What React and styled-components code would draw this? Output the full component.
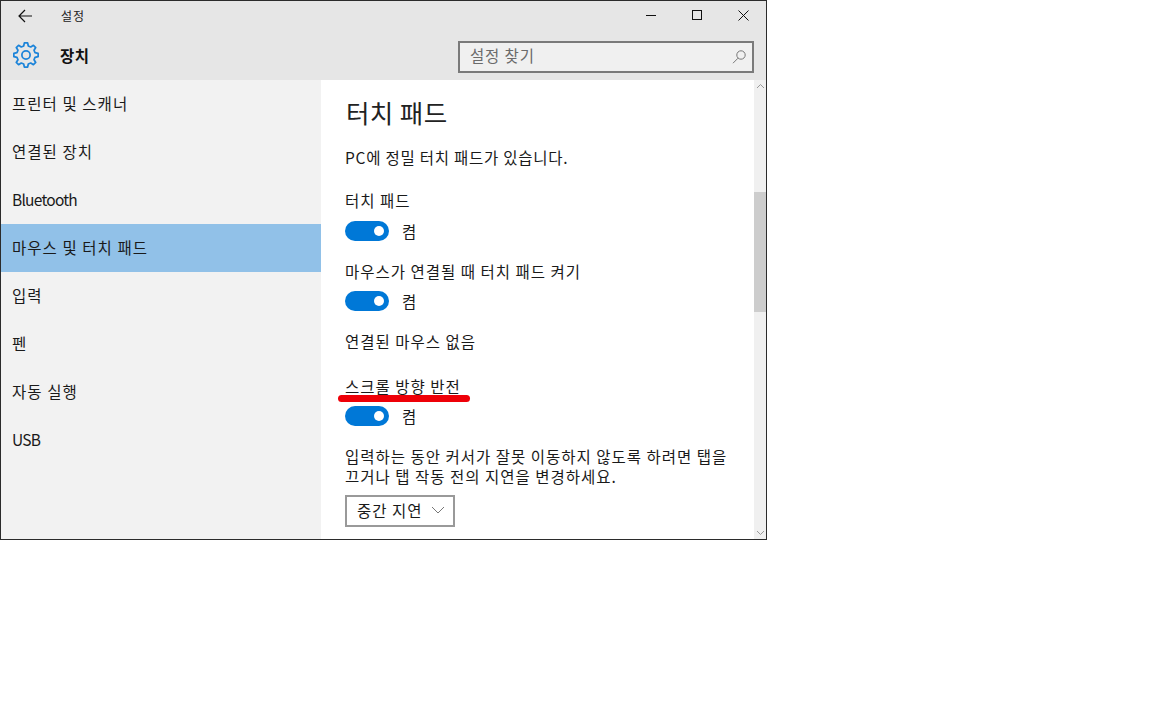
import React from "react";
import styled, { createGlobalStyle } from "styled-components";

const Global = createGlobalStyle`
  html, body { margin: 0; padding: 0; background: #fff; }
  body { font-family: "Noto Sans CJK KR", "Noto Sans", sans-serif; color: #1a1a1a; }
  * { box-sizing: border-box; }
`;
const Win = styled.div`
  width: 767px; height: 540px; border: 1px solid #2b2b2b; display: flex; flex-direction: column; background: #fff; overflow: hidden;
`;
const Header = styled.header`
  height: 79px; background: #e6e6e6; display: flex; flex-direction: column; flex: none;
`;
const TitleBar = styled.div`
  height: 29px; display: flex; align-items: center;
`;
const BackBtn = styled.div`
  width: 48px; height: 29px; display: flex; align-items: center; padding-left: 17px;
`;
const TitleText = styled.div`
  font-size: 12px; letter-spacing: 0.9px; margin-left: 12px; flex: 1; color: #222;
`;
const WinBtn = styled.div`
  width: 46px; height: 29px; display: flex; align-items: center; justify-content: center;
`;
const HeadRow = styled.div`
  flex: 1; display: flex; align-items: center; padding: 0 12px 0 12px;
`;
const PageName = styled.div`
  font-size: 15.5px; font-weight: 700; margin-left: 21px; flex: 1; color: #111; letter-spacing: 0.6px;
`;
const Search = styled.div`
  width: 296px; height: 32px; border: 2px solid #7a7a7a; background: #f0f0f0; display: flex; align-items: center; justify-content: space-between; padding: 0 5px 3px 10px; margin-top: 3px; font-size: 15.5px; letter-spacing: 0.85px; color: #6b6b6b;
`;
const Body = styled.div`
  flex: 1; display: flex; min-height: 0;
`;
const Side = styled.nav`
  width: 320px; background: #f2f2f2; flex: none;
`;
const Item = styled.div`
  height: 48px; display: flex; align-items: center; padding: 0 0 2px 11px; font-size: 15.5px; color: #1a1a1a;
  letter-spacing: ${p => (p.$latin ? "-0.75px" : "1.05px")};
  background: ${p => (p.$active ? "#91c1e8" : "transparent")};
`;
const Main = styled.main`
  flex: 1; padding: 0 24px; background: #fff; position: relative;
`;
const H1 = styled.h1`
  margin: 14px 0 0 1px; font-size: 25.5px; font-weight: 400; line-height: 36px; color: #222; letter-spacing: 0.4px;
`;
const Text = styled.div`
  font-size: 15.5px; line-height: 20px; margin-top: ${p => p.$mt}px; letter-spacing: ${p => p.$ls || 1}px; color: #1a1a1a; position: relative; white-space: nowrap;
`;
const ToggleRow = styled.div`
  display: flex; align-items: center; gap: 13px; height: 20px; margin-top: ${p => p.$mt}px; font-size: 15.5px; color: #1a1a1a;
`;
const Track = styled.div`
  width: 44px; height: 20px; border-radius: 10px; background: #0078d7; display: flex; align-items: center; justify-content: flex-end; padding-right: 5px;
`;
const Knob = styled.div`
  width: 10px; height: 10px; border-radius: 50%; background: #fff;
`;
const RedLine = styled.div`
  position: absolute; left: -7px; top: 19px; width: 132px; height: 7px; border-radius: 4px; background: #ee0008;
`;
const Select = styled.div`
  width: 110px; height: 32px; margin-top: 9px; border: 2px solid #999; display: flex; align-items: center; justify-content: space-between; padding: 0 8px 2px 10px; font-size: 15.5px; letter-spacing: 1px; background: #fff;
`;
const Scroll = styled.div`
  width: 12px; flex: none; background: #f0f0f0; display: flex; flex-direction: column; align-items: center;
`;
const Arrow = styled.div`
  height: 12px; flex: none; display: flex; align-items: center; justify-content: center;
`;
const Thumb = styled.div`
  width: 12px; height: 120px; margin-top: 100px; background: #cdcdcd;
`;
const Spacer = styled.div`flex: 1;`;

const gearPath = (() => {
  const n = 8, R = 11.3, r = 8.6, pts = [];
  for (let i = 0; i < n; i++) {
    const a = (i * 2 * Math.PI) / n - Math.PI / 2;
    const step = (2 * Math.PI) / n;
    const p = (rad, t) => `${(12 + rad * Math.cos(t)).toFixed(2)} ${(12 + rad * Math.sin(t)).toFixed(2)}`;
    pts.push(p(R, a - step * 0.17), p(R, a + step * 0.17), p(r, a + step * 0.32), p(r, a + step * 0.68));
  }
  return "M" + pts.join("L") + "Z";
})();

const Gear = () => (
  <svg width="26" height="26" viewBox="0 0 24 24" fill="none" stroke="#1c84d9" strokeWidth="1.6" strokeLinejoin="round">
    <circle cx="12" cy="12" r="3.8" />
    <path d={gearPath} />
  </svg>
);

export default function App() {
  return (
    <>
      <Global />
      <Win>
        <Header>
          <TitleBar>
            <BackBtn>
              <svg width="14" height="14" viewBox="0 0 14 14" fill="none" stroke="#111" strokeWidth="1.2"><path d="M7 1 1 7l6 6M1 7h13" /></svg>
            </BackBtn>
            <TitleText>설정</TitleText>
            <WinBtn><svg width="11" height="11" viewBox="0 0 11 11" fill="none" stroke="#111"><path d="M0 5.5h10" /></svg></WinBtn>
            <WinBtn><svg width="11" height="11" viewBox="0 0 11 11" fill="none" stroke="#111"><rect x=".5" y=".5" width="9" height="9" /></svg></WinBtn>
            <WinBtn><svg width="11" height="11" viewBox="0 0 11 11" fill="none" stroke="#111"><path d="M.5.5l10 10M10.5.5l-10 10" /></svg></WinBtn>
          </TitleBar>
          <HeadRow>
            <Gear />
            <PageName>장치</PageName>
            <Search>
              <span>설정 찾기</span>
              <svg width="16" height="16" viewBox="0 0 16 16" fill="none" stroke="#777" style={{ marginTop: 3 }}><circle cx="10" cy="6" r="4.2" /><path d="M7 9.2l-5 5" /></svg>
            </Search>
          </HeadRow>
        </Header>
        <Body>
          <Side>
            <Item>프린터 및 스캐너</Item>
            <Item>연결된 장치</Item>
            <Item $latin>Bluetooth</Item>
            <Item $active>마우스 및 터치 패드</Item>
            <Item>입력</Item>
            <Item>펜</Item>
            <Item>자동 실행</Item>
            <Item $latin>USB</Item>
          </Side>
          <Main>
            <H1>터치 패드</H1>
            <Text $mt={17} $ls={0.75}>PC에 정밀 터치 패드가 있습니다.</Text>
            <Text $mt={23}>터치 패드</Text>
            <ToggleRow $mt={11}><Track><Knob /></Track>켬</ToggleRow>
            <Text $mt={20}>마우스가 연결될 때 터치 패드 켜기</Text>
            <ToggleRow $mt={10}><Track><Knob /></Track>켬</ToggleRow>
            <Text $mt={20}>연결된 마우스 없음</Text>
            <Text $mt={25}>스크롤 방향 반전<RedLine /></Text>
            <ToggleRow $mt={10}><Track><Knob /></Track>켬</ToggleRow>
            <Text $mt={20}>입력하는 동안 커서가 잘못 이동하지 않도록 하려면 탭을<br />끄거나 탭 작동 전의 지연을 변경하세요.</Text>
            <Select>
              <span>중간 지연</span>
              <svg width="14" height="8" viewBox="0 0 14 8" fill="none" stroke="#777"><path d="M1 1l6 6 6-6" /></svg>
            </Select>
          </Main>
          <Scroll>
            <Arrow><svg width="9" height="6" viewBox="0 0 9 6" fill="none" stroke="#999"><path d="M1 5l3.5-3.5L8 5" /></svg></Arrow>
            <Thumb />
            <Spacer />
            <Arrow><svg width="9" height="6" viewBox="0 0 9 6" fill="none" stroke="#999"><path d="M1 1l3.5 3.5L8 1" /></svg></Arrow>
          </Scroll>
        </Body>
      </Win>
    </>
  );
}
